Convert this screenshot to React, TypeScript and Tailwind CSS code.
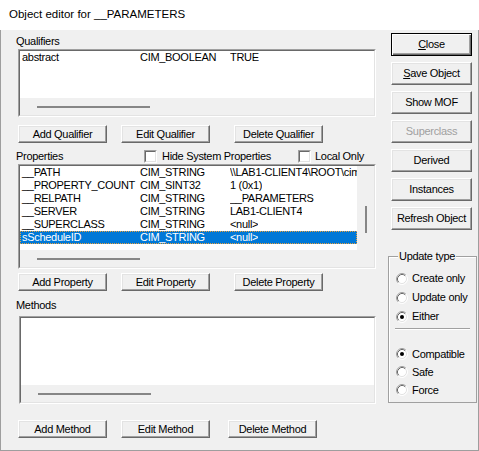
import React from 'react';

type Row = [string, string, string];

const qualifiers: Row[] = [['abstract', 'CIM_BOOLEAN', 'TRUE']];

const properties: Row[] = [
  ['__PATH', 'CIM_STRING', '\\\\LAB1-CLIENT4\\ROOT\\cimv2:__PARAMETERS'],
  ['__PROPERTY_COUNT', 'CIM_SINT32', '1 (0x1)'],
  ['__RELPATH', 'CIM_STRING', '__PARAMETERS'],
  ['__SERVER', 'CIM_STRING', 'LAB1-CLIENT4'],
  ['__SUPERCLASS', 'CIM_STRING', '<null>'],
  ['sScheduleID', 'CIM_STRING', '<null>'],
];

function Btn({
  children,
  className = '',
  disabled = false,
  isDefault = false,
}: {
  children: React.ReactNode;
  className?: string;
  disabled?: boolean;
  isDefault?: boolean;
}) {
  return (
    <div
      className={`flex shrink-0 items-center justify-center bg-[#f0f0f0] leading-[13px] ${
        isDefault
          ? 'border border-black shadow-[inset_1px_1px_0_#fff,inset_-1px_-1px_0_#696969,inset_-2px_-2px_0_#a0a0a0]'
          : 'border border-t-white border-l-white border-r-[#696969] border-b-[#696969] shadow-[inset_-1px_-1px_0_#a0a0a0,inset_1px_1px_0_#e3e3e3]'
      } ${disabled ? 'text-[#a0a0a0]' : 'text-black'} ${className}`}
    >
      {children}
    </div>
  );
}

function Sunken({ className = '', children }: { className?: string; children: React.ReactNode }) {
  return (
    <div className={`border border-t-[#a0a0a0] border-l-[#a0a0a0] border-r-white border-b-white ${className}`}>
      <div className="flex h-full flex-col border border-t-[#696969] border-l-[#696969] border-r-[#e3e3e3] border-b-[#e3e3e3]">
        {children}
      </div>
    </div>
  );
}

function HScroll({ thumbLeft, thumbWidth }: { thumbLeft: number; thumbWidth: number }) {
  return (
    <div className="flex h-[17px] shrink-0 items-center bg-[#f0f0f0]">
      <div className="h-[2px] bg-[#868686]" style={{ marginLeft: thumbLeft, width: thumbWidth }} />
    </div>
  );
}

function ListRow({ row, selected = false }: { row: Row; selected?: boolean }) {
  return (
    <div
      className={`flex h-[13px] whitespace-nowrap pl-[2px] leading-[13px] ${
        selected ? 'bg-[#0078d7] text-white outline-1 outline-dotted outline-[#e9a03b] -outline-offset-1' : ''
      }`}
    >
      <span className="w-[118px] shrink-0">{row[0]}</span>
      <span className="w-[90px] shrink-0">{row[1]}</span>
      <span className="overflow-hidden">{row[2]}</span>
    </div>
  );
}

function CheckBox() {
  return (
    <div className="h-[13px] w-[13px] shrink-0 border border-t-[#a0a0a0] border-l-[#a0a0a0] border-r-white border-b-white">
      <div className="h-full w-full border border-t-[#696969] border-l-[#696969] border-r-[#e3e3e3] border-b-[#e3e3e3] bg-white" />
    </div>
  );
}

function Radio({ checked = false }: { checked?: boolean }) {
  return (
    <svg width="12" height="12" viewBox="0 0 12 12" className="shrink-0">
      <circle cx="6" cy="6" r="5" fill="#fff" />
      <path d="M2.11 9.89 A5.5 5.5 0 0 1 9.89 2.11" fill="none" stroke="#a0a0a0" />
      <path d="M9.89 2.11 A5.5 5.5 0 0 1 2.11 9.89" fill="none" stroke="#ffffff" />
      <path d="M2.82 9.18 A4.5 4.5 0 0 1 9.18 2.82" fill="none" stroke="#696969" />
      <path d="M9.18 2.82 A4.5 4.5 0 0 1 2.82 9.18" fill="none" stroke="#e3e3e3" />
      {checked && <circle cx="6" cy="6" r="2" fill="#000" />}
    </svg>
  );
}

function RadioRow({ label, checked = false, tall = false }: { label: string; checked?: boolean; tall?: boolean }) {
  return (
    <div className={`flex items-center pl-[7px] ${tall ? 'h-[19px]' : 'h-[18px]'}`}>
      <Radio checked={checked} />
      <span className="ml-[4px] leading-[13px]">{label}</span>
    </div>
  );
}

export default function App() {
  return (
    <div className="h-[451px] w-[479px] bg-white font-['Liberation_Sans',Arial,sans-serif] text-[11px] tracking-[-0.3px] text-black">
      {/* Title bar */}
      <div className="flex h-[30px] items-center pl-[9px] text-[11.5px] tracking-normal">Object editor for __PARAMETERS</div>

      <div className="flex h-[421px] border-x border-b border-[#9e9e9e] bg-[#f0f0f0]">
        {/* Left column */}
        <div className="flex w-[387px] flex-col pl-[15px] pt-[5px]">
          <div className="h-[13px] leading-[13px]">Qualifiers</div>
          <Sunken className="ml-[2px] mt-[1px] h-[68px] w-[358px]">
            <div className="flex-1 bg-white">
              {qualifiers.map((q) => (
                <ListRow key={q[0]} row={q} />
              ))}
            </div>
            <HScroll thumbLeft={17} thumbWidth={113} />
          </Sunken>
          <div className="ml-[2px] mt-[8px] flex h-[18px]">
            <Btn className="w-[89px]">Add Qualifier</Btn>
            <Btn className="ml-[14px] w-[89px]">Edit Qualifier</Btn>
            <Btn className="ml-[24px] w-[89px]">Delete Qualifier</Btn>
          </div>

          <div className="mt-[6px] flex h-[14px] items-center leading-[13px]">
            <span className="w-[128px] shrink-0">Properties</span>
            <CheckBox />
            <span className="ml-[5px] w-[136px] shrink-0">Hide System Properties</span>
            <CheckBox />
            <span className="ml-[4px]">Local Only</span>
          </div>
          <Sunken className="ml-[2px] mt-[1px] h-[105px] w-[358px]">
            <div className="flex flex-1">
              <div className="flex-1 overflow-hidden bg-white">
                {properties.map((p) => (
                  <ListRow key={p[0]} row={p} selected={p[0] === 'sScheduleID'} />
                ))}
              </div>
              <div className="flex w-[17px] shrink-0 justify-center bg-[#f0f0f0]">
                <div className="mt-[40px] h-[27px] w-[2px] bg-[#868686]" />
              </div>
            </div>
            <HScroll thumbLeft={17} thumbWidth={103} />
          </Sunken>
          <div className="ml-[2px] mt-[4px] flex h-[18px]">
            <Btn className="w-[89px]">Add Property</Btn>
            <Btn className="ml-[14px] w-[89px]">Edit Property</Btn>
            <Btn className="ml-[24px] w-[89px]">Delete Property</Btn>
          </div>

          <div className="mt-[8px] h-[13px] leading-[13px]">Methods</div>
          <Sunken className="ml-[3px] mt-[4px] h-[88px] w-[357px]">
            <div className="flex-1 bg-white" />
            <HScroll thumbLeft={17} thumbWidth={113} />
          </Sunken>
          <div className="ml-[2px] mt-[16px] flex h-[18px]">
            <Btn className="w-[89px]">Add Method</Btn>
            <Btn className="ml-[14px] w-[89px]">Edit Method</Btn>
            <Btn className="ml-[18px] w-[89px]">Delete Method</Btn>
          </div>
        </div>

        {/* Right column */}
        <div className="flex w-[90px] flex-col pt-[3px]">
          <div className="ml-[3px] flex w-[81px] flex-col gap-[6px]">
            <Btn isDefault className="h-[23px]">
              <span>
                <span className="underline">C</span>lose
              </span>
            </Btn>
            <Btn className="h-[23px]">
              <span>
                <span className="underline">S</span>ave Object
              </span>
            </Btn>
            <Btn className="h-[23px]">Show MOF</Btn>
            <Btn disabled className="h-[23px]">
              Superclass
            </Btn>
            <Btn className="h-[23px]">Derived</Btn>
            <Btn className="h-[23px]">Instances</Btn>
            <Btn className="h-[23px]">Refresh Object</Btn>
          </div>

          <div className="relative mt-[26px] h-[147px] w-[89px] border border-[#a0a0a0] shadow-[inset_1px_1px_0_#fff]">
            <span className="absolute -top-[7px] left-[9px] bg-[#f0f0f0] px-[1px] leading-[13px]">Update type</span>
            <div className="pt-[12px]">
              <RadioRow tall label="Create only" />
              <RadioRow tall label="Update only" />
              <RadioRow tall label="Either" checked />
              <div className="mx-[6px] mt-[2px] h-[2px] border-t border-b border-t-[#a0a0a0] border-b-white" />
              <div className="mt-[15px]">
                <RadioRow label="Compatible" checked />
                <RadioRow label="Safe" />
                <RadioRow label="Force" />
              </div>
            </div>
          </div>
        </div>
      </div>
    </div>
  );
}
